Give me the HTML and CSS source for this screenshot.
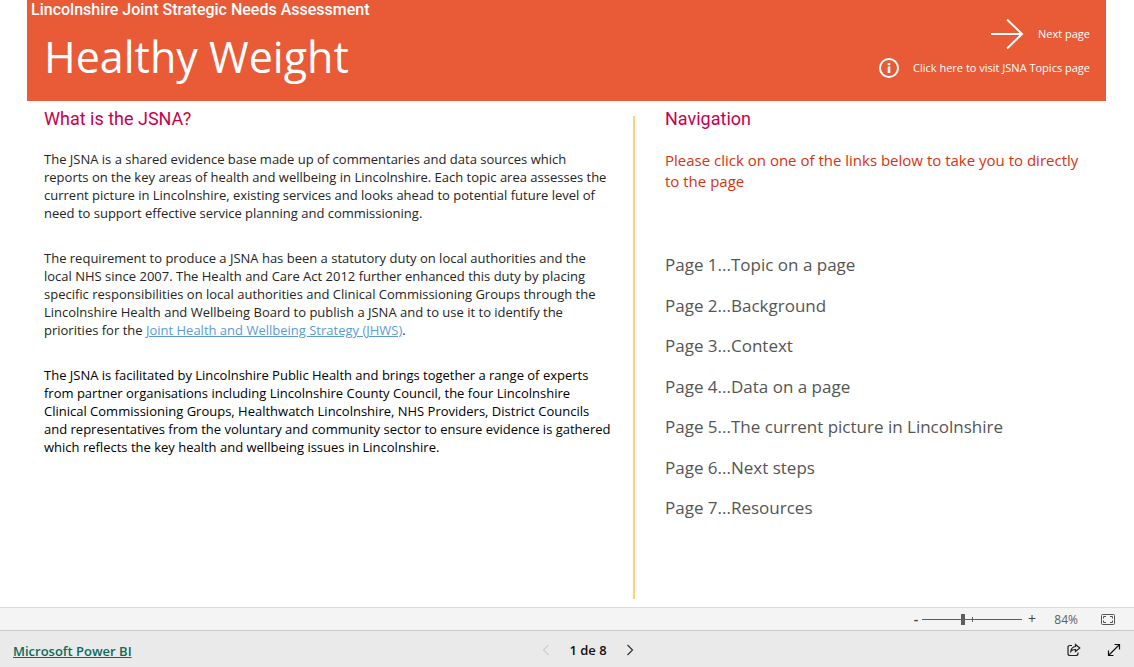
FILE: index.html
```html
<!DOCTYPE html>
<html lang="en">
<head>
<meta charset="utf-8">
<title>Healthy Weight</title>
<link rel="stylesheet" href="styles.css">
</head>
<body>
<main class="report">
  <header class="banner">
    <div class="titles">
      <p class="kicker">Lincolnshire Joint Strategic Needs Assessment</p>
      <h1 class="title">Healthy Weight</h1>
    </div>
    <nav class="actions">
      <a class="action action-next" href="#next">
        <svg width="34" height="32" viewBox="0 0 34 32" fill="none" stroke="#fff" stroke-width="2"><path d="M1 16H32M17 1.500L32 16L17 30.500"/></svg>
        <span>Next page</span>
      </a>
      <a class="action action-info" href="#topics">
        <svg width="22" height="22" viewBox="0 0 22 22" fill="none" stroke="#fff"><circle cx="11" cy="11" r="9" stroke-width="2"/><path d="M11 9.500V16M11 6V8.300" stroke-width="2.500"/></svg>
        <span>Click here to visit JSNA Topics page</span>
      </a>
    </nav>
  </header>
  <div class="columns">
    <section class="about">
      <h2 class="heading">What is the JSNA?</h2>
      <p class="text">The JSNA is a shared evidence base made up of commentaries and data sources which<br>reports on the key areas of health and wellbeing in Lincolnshire. Each topic area assesses the<br>current picture in Lincolnshire, existing services and looks ahead to potential future level of<br>need to support effective service planning and commissioning.</p>
      <p class="text">The requirement to produce a JSNA has been a statutory duty on local authorities and the<br>local NHS since 2007. The Health and Care Act 2012 further enhanced this duty by placing<br>specific responsibilities on local authorities and Clinical Commissioning Groups through the<br>Lincolnshire Health and Wellbeing Board to publish a JSNA and to use it to identify the<br>priorities for the <a class="strategy" href="#jhws">Joint Health and Wellbeing Strategy (JHWS)</a>.</p>
      <p class="text text-dark">The JSNA is facilitated by Lincolnshire Public Health and brings together a range of experts<br>from partner organisations including Lincolnshire County Council, the four Lincolnshire<br>Clinical Commissioning Groups, Healthwatch Lincolnshire, NHS Providers, District Councils<br>and representatives from the voluntary and community sector to ensure evidence is gathered<br>which reflects the key health and wellbeing issues in Lincolnshire.</p>
    </section>
    <section class="navigation">
      <h2 class="heading">Navigation</h2>
      <p class="hint">Please click on one of the links below to take you to directly<br>to the page</p>
      <nav class="pages">
        <a href="#p1">Page 1...Topic on a page</a>
        <a href="#p2">Page 2...Background</a>
        <a href="#p3">Page 3...Context</a>
        <a href="#p4">Page 4...Data on a page</a>
        <a href="#p5">Page 5...The current picture in Lincolnshire</a>
        <a href="#p6">Page 6...Next steps</a>
        <a href="#p7">Page 7...Resources</a>
      </nav>
    </section>
  </div>
</main>
<div class="zoombar">
  <button class="icon-button zoom-step" aria-label="Zoom out">-</button>
  <input class="slider" type="range" min="10" max="190" value="84" aria-label="Zoom">
  <button class="icon-button zoom-step zoom-in" aria-label="Zoom in">+</button>
  <span class="percent">84%</span>
  <button class="icon-button" aria-label="Fit to page">
    <svg width="14" height="11" viewBox="0 0 14 11" fill="none" stroke="#555"><rect x=".5" y=".5" width="13" height="10" rx="1"/><path d="M5 2.500H2.500V4.500M9 2.500H11.500V4.500M2.500 6.500V8.500H5M11.500 6.500V8.500H9"/></svg>
  </button>
</div>
<footer class="footer">
  <div class="brand-area"><a class="brand" href="#powerbi">Microsoft Power BI</a></div>
  <div class="pager">
    <button class="icon-button" aria-label="Previous page" disabled><svg width="8" height="12" viewBox="0 0 8 12" fill="none" stroke="#bdbdbd"><path d="M6.500 1L1.500 6L6.500 11"/></svg></button>
    <span>1 de 8</span>
    <button class="icon-button" aria-label="Next page"><svg width="8" height="12" viewBox="0 0 8 12" fill="none" stroke="#333" stroke-width="1.200"><path d="M1.500 1L6.500 6L1.500 11"/></svg></button>
  </div>
  <div class="tools">
    <button class="icon-button" aria-label="Share"><svg width="14" height="14" viewBox="0 0 14 14" fill="none" stroke="#222" stroke-width="1.200"><path d="M5 2.500H3Q1 2.500 1 4.500V10.500Q1 12.500 3 12.500H9Q11 12.500 11 10.500V9.500"/><path d="M8.500 1.500L12.800 5L8.500 8.500V6.500Q5.500 6.300 3.800 8.500Q4.300 4 8.500 3.500Z"/></svg></button>
    <button class="icon-button" aria-label="Full screen"><svg width="14" height="14" viewBox="0 0 14 14" fill="none" stroke="#111" stroke-width="1.200"><path d="M1.500 12.500L12.500 1.500M7.500 1.500H12.500V6.500M1.500 7.500V12.500H6.500"/></svg></button>
  </div>
</footer>
</body>
</html>
```
FILE: styles.css
```css
* { box-sizing: border-box; }
body {
  margin: 0;
  min-height: 100vh;
  display: flex;
  flex-direction: column;
  background: #fff;
  font-family: "Open Sans", "Noto Sans", sans-serif;
  color: #252423;
}
h1, h2, p { margin: 0; font-weight: 400; }
a { color: inherit; text-decoration: none; }
.report {
  flex: 1;
  display: flex;
  flex-direction: column;
  padding: 0 28px 8px 27px;
}
.banner {
  display: flex;
  justify-content: space-between;
  height: 101px;
  padding: 0 16px 0 4px;
  background: #e85b36;
  color: #fff;
}
.kicker {
  font: 500 16px/20px Roboto, sans-serif;
}
.title {
  padding-left: 13px;
  font-size: 43px;
  line-height: 74px;
}
.actions {
  display: flex;
  flex-direction: column;
  align-items: flex-end;
  padding-top: 17px;
  font: 11px/16px "Open Sans", sans-serif;
}
.action { display: flex; align-items: center; }
.action-next { gap: 14px; height: 34px; }
.action-info { gap: 13px; height: 34px; }
.columns {
  flex: 1;
  display: grid;
  grid-template-columns: 591px 1fr;
  padding: 6px 0 0 17px;
}
.heading {
  font: 18px/24px Roboto, sans-serif;
  color: #c8004b;
}
.about { position: relative; }
.about::after {
  content: "";
  position: absolute;
  top: 9px;
  right: 0;
  bottom: 0;
  width: 2px;
  background: #fdd27c;
}
.text {
  margin-bottom: 27px;
  font: 13px/18px "Open Sans", sans-serif;
  white-space: nowrap;
}
.heading + .text { margin-top: 19px; }
.text-dark { color: #000; }
.strategy { color: #5b9bd5; text-decoration: underline; }
.navigation { padding-left: 30px; }
.hint {
  margin-top: 19px;
  font: 15px/21px "Open Sans", sans-serif;
  color: #d6330d;
  white-space: nowrap;
}
.pages {
  display: flex;
  flex-direction: column;
  justify-content: space-between;
  min-height: 267px;
  margin-top: 61px;
  font: 17px/24px "Open Sans", sans-serif;
  color: #555;
}
.zoombar {
  display: flex;
  justify-content: flex-end;
  align-items: center;
  height: 24px;
  padding-right: 19px;
  border-top: 1px solid #dcdcdc;
  border-bottom: 1px solid #c8c8c8;
  background: #f4f4f4;
  color: #605e5c;
  font-size: 12px;
}
.icon-button {
  display: flex;
  align-items: center;
  justify-content: center;
  padding: 0;
  border: 0;
  background: none;
  color: #444;
  font: 14px/16px "Open Sans", sans-serif;
}
.zoom-step { width: 12px; font-weight: 600; }
.zoom-in { margin-left: 4px; font-weight: 400; }
.slider {
  width: 100px;
  height: 12px;
  margin: 0;
  appearance: none;
  background:
    linear-gradient(#605e5c, #605e5c) 50px 4px / 1px 5px no-repeat,
    linear-gradient(#605e5c, #605e5c) 0 6px / 100% 1px no-repeat;
}
.slider::-webkit-slider-thumb {
  appearance: none;
  width: 4px;
  height: 11px;
  background: #605e5c;
}
.percent {
  width: 40px;
  margin-right: 23px;
  text-align: right;
}
.footer {
  display: grid;
  grid-template-columns: 1fr auto 1fr;
  align-items: center;
  height: 36px;
  padding: 2px 13px 0;
  background: #eaeaea;
}
.brand {
  color: #0b6a5d;
  font: 600 13px/18px "Open Sans", sans-serif;
  text-decoration: underline;
}
.pager {
  display: flex;
  align-items: center;
  gap: 19px;
  margin-left: 42px;
  color: #111;
  font: 600 13px/18px "Open Sans", sans-serif;
}
.tools {
  display: flex;
  justify-content: flex-end;
  gap: 26px;
}
```
